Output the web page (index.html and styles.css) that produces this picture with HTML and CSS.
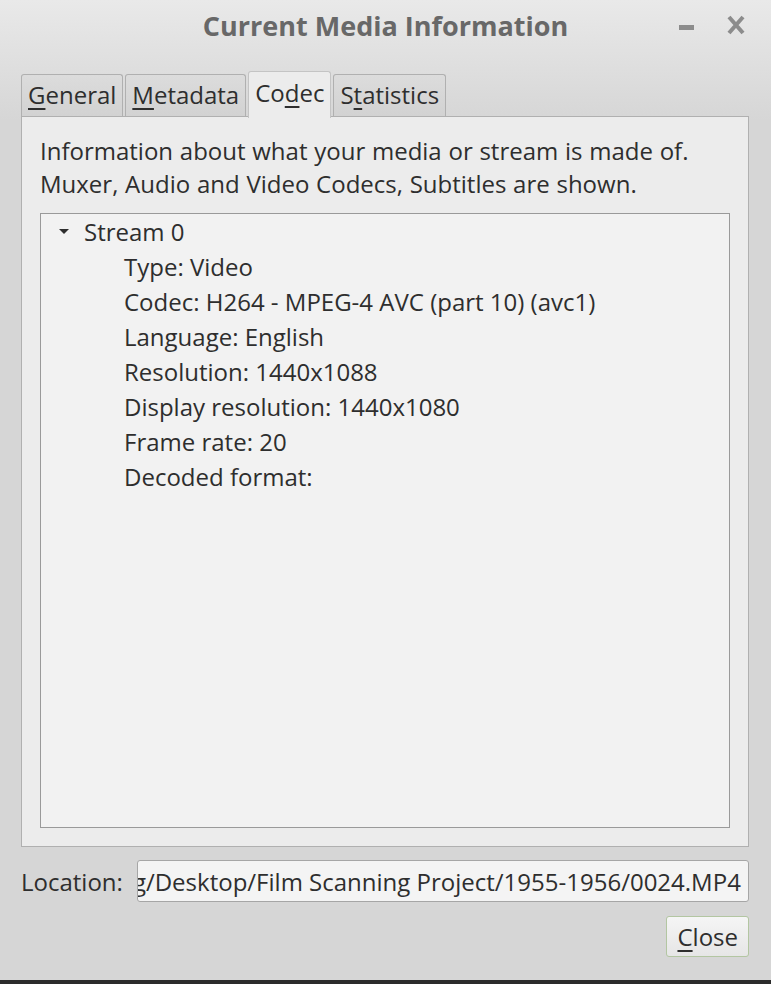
FILE: index.html
```html
<!DOCTYPE html>
<html lang="en">
<head>
  <meta charset="UTF-8" />
  <title>Current Media Information</title>
  <link rel="stylesheet" href="styles.css">
</head>
<body>

  <div class="window">
    <div class="titlebar">
      <span class="title">Current Media Information</span>
      <div class="wm-buttons">
        <span class="wm-min"></span>
        <svg class="wm-close" width="18" height="20" viewBox="0 0 18 20">
          <path d="M2 2 L16 18 M16 2 L2 18" stroke="#8c8c8c" stroke-width="4"/>
        </svg>
      </div>
    </div>

    <div class="content">
      <div class="tabs">
        <div class="tab"><u>G</u>eneral</div>
        <div class="tab"><u>M</u>etadata</div>
        <div class="tab active">Co<u>d</u>ec</div>
        <div class="tab">S<u>t</u>atistics</div>
      </div>

      <div class="panel">
        <p class="info">Information about what your media or stream is made of.<br>Muxer, Audio and Video Codecs, Subtitles are shown.</p>
        <div class="tree">
          <div class="node">
            <span class="arrow"></span>
            <span>Stream 0</span>
          </div>
          <div class="leaf">Type: Video</div>
          <div class="leaf">Codec: H264 - MPEG-4 AVC (part 10) (avc1)</div>
          <div class="leaf">Language: English</div>
          <div class="leaf">Resolution: 1440x1088</div>
          <div class="leaf">Display resolution: 1440x1080</div>
          <div class="leaf">Frame rate: 20</div>
          <div class="leaf">Decoded format:</div>
        </div>
      </div>

      <div class="location">
        <label>Location:</label>
        <div class="field"><span class="path">g/Desktop/Film Scanning Project/1955-1956/0024.MP4</span></div>
      </div>

      <div class="actions">
        <button class="btn"><u>C</u>lose</button>
      </div>
    </div>
  </div>

</body>
</html>
```

FILE: styles.css
```css
body {
  margin: 0;
  width: 771px;
  height: 984px;
  overflow: hidden;
  background: #d6d6d6;
  font-family: "Open Sans", "Noto Sans", sans-serif;
  color: #2e2e2e;
}

u {
  text-decoration-thickness: 2px;
  text-underline-offset: 4px;
}

.window {
  height: 980px;
  display: flex;
  flex-direction: column;
  background: linear-gradient(#e9e9e9, #d6d6d6 120px);
  border-bottom: 4px solid #2b2b2b;
}

.titlebar {
  height: 52px;
  position: relative;
  display: flex;
  justify-content: center;
  align-items: center;
}

.title {
  font-weight: bold;
  font-size: 27px;
  color: #686868;
  margin-top: -1px;
}

.wm-buttons {
  position: absolute;
  right: 26px;
  top: 15px;
  display: flex;
  align-items: center;
  gap: 33px;
}

.wm-min {
  width: 15px;
  height: 5px;
  background: #8c8c8c;
  margin-top: 4px;
}

.content {
  flex: 1;
  padding: 19px 22px 0 21px;
  display: flex;
  flex-direction: column;
}

.tabs {
  display: flex;
  align-items: flex-end;
  gap: 2px;
  height: 45px;
  position: relative;
  z-index: 1;
}

.tab {
  font-size: 24px;
  height: 41px;
  line-height: 40px;
  padding: 0 6px;
  border: 1px solid #b0b0b0;
  border-bottom: none;
  border-radius: 3px 3px 0 0;
  background: linear-gradient(#dcdcdc, #d2d2d2);
}

.tab.active {
  height: 46px;
  line-height: 42px;
  background: #ececec;
  margin-bottom: -2px;
  border-color: #c4c4c4;
}

.panel {
  height: 729px;
  border: 1px solid #b0b0b0;
  background: #ececec;
  padding: 0 18px;
  display: flex;
  flex-direction: column;
}

.info {
  margin: 17px 0 0 0;
  font-size: 24px;
  line-height: 33px;
  word-spacing: 0.5px;
}

.tree {
  margin-top: 13px;
  height: 613px;
  border: 1px solid #9a9a9a;
  background: #f2f2f2;
  font-size: 24px;
  line-height: 35px;
}

.node {
  display: flex;
  align-items: center;
  padding-left: 18px;
}

.arrow {
  width: 0;
  height: 0;
  border-left: 5px solid transparent;
  border-right: 5px solid transparent;
  border-top: 5px solid #2e2e2e;
  margin-right: 15px;
}

.leaf {
  padding-left: 83px;
}

.location {
  margin-top: 13px;
  display: flex;
  align-items: center;
  gap: 14px;
  font-size: 24px;
}

.field {
  flex: 1;
  height: 40px;
  border: 1px solid #a6a6a6;
  border-radius: 3px;
  background: #f4f4f4;
  overflow: hidden;
  display: flex;
  align-items: center;
  white-space: nowrap;
}

.path {
  margin-left: -5px;
}

.actions {
  margin-top: 14px;
  display: flex;
  justify-content: flex-end;
}

.btn {
  font-family: "Open Sans", "Noto Sans", sans-serif;
  font-size: 24px;
  color: #2e2e2e;
  height: 41px;
  padding: 0 10px;
  border: 1px solid #b3c6a2;
  border-radius: 3px;
  background: linear-gradient(#f5f5f5, #e6e6e6);
}
```
